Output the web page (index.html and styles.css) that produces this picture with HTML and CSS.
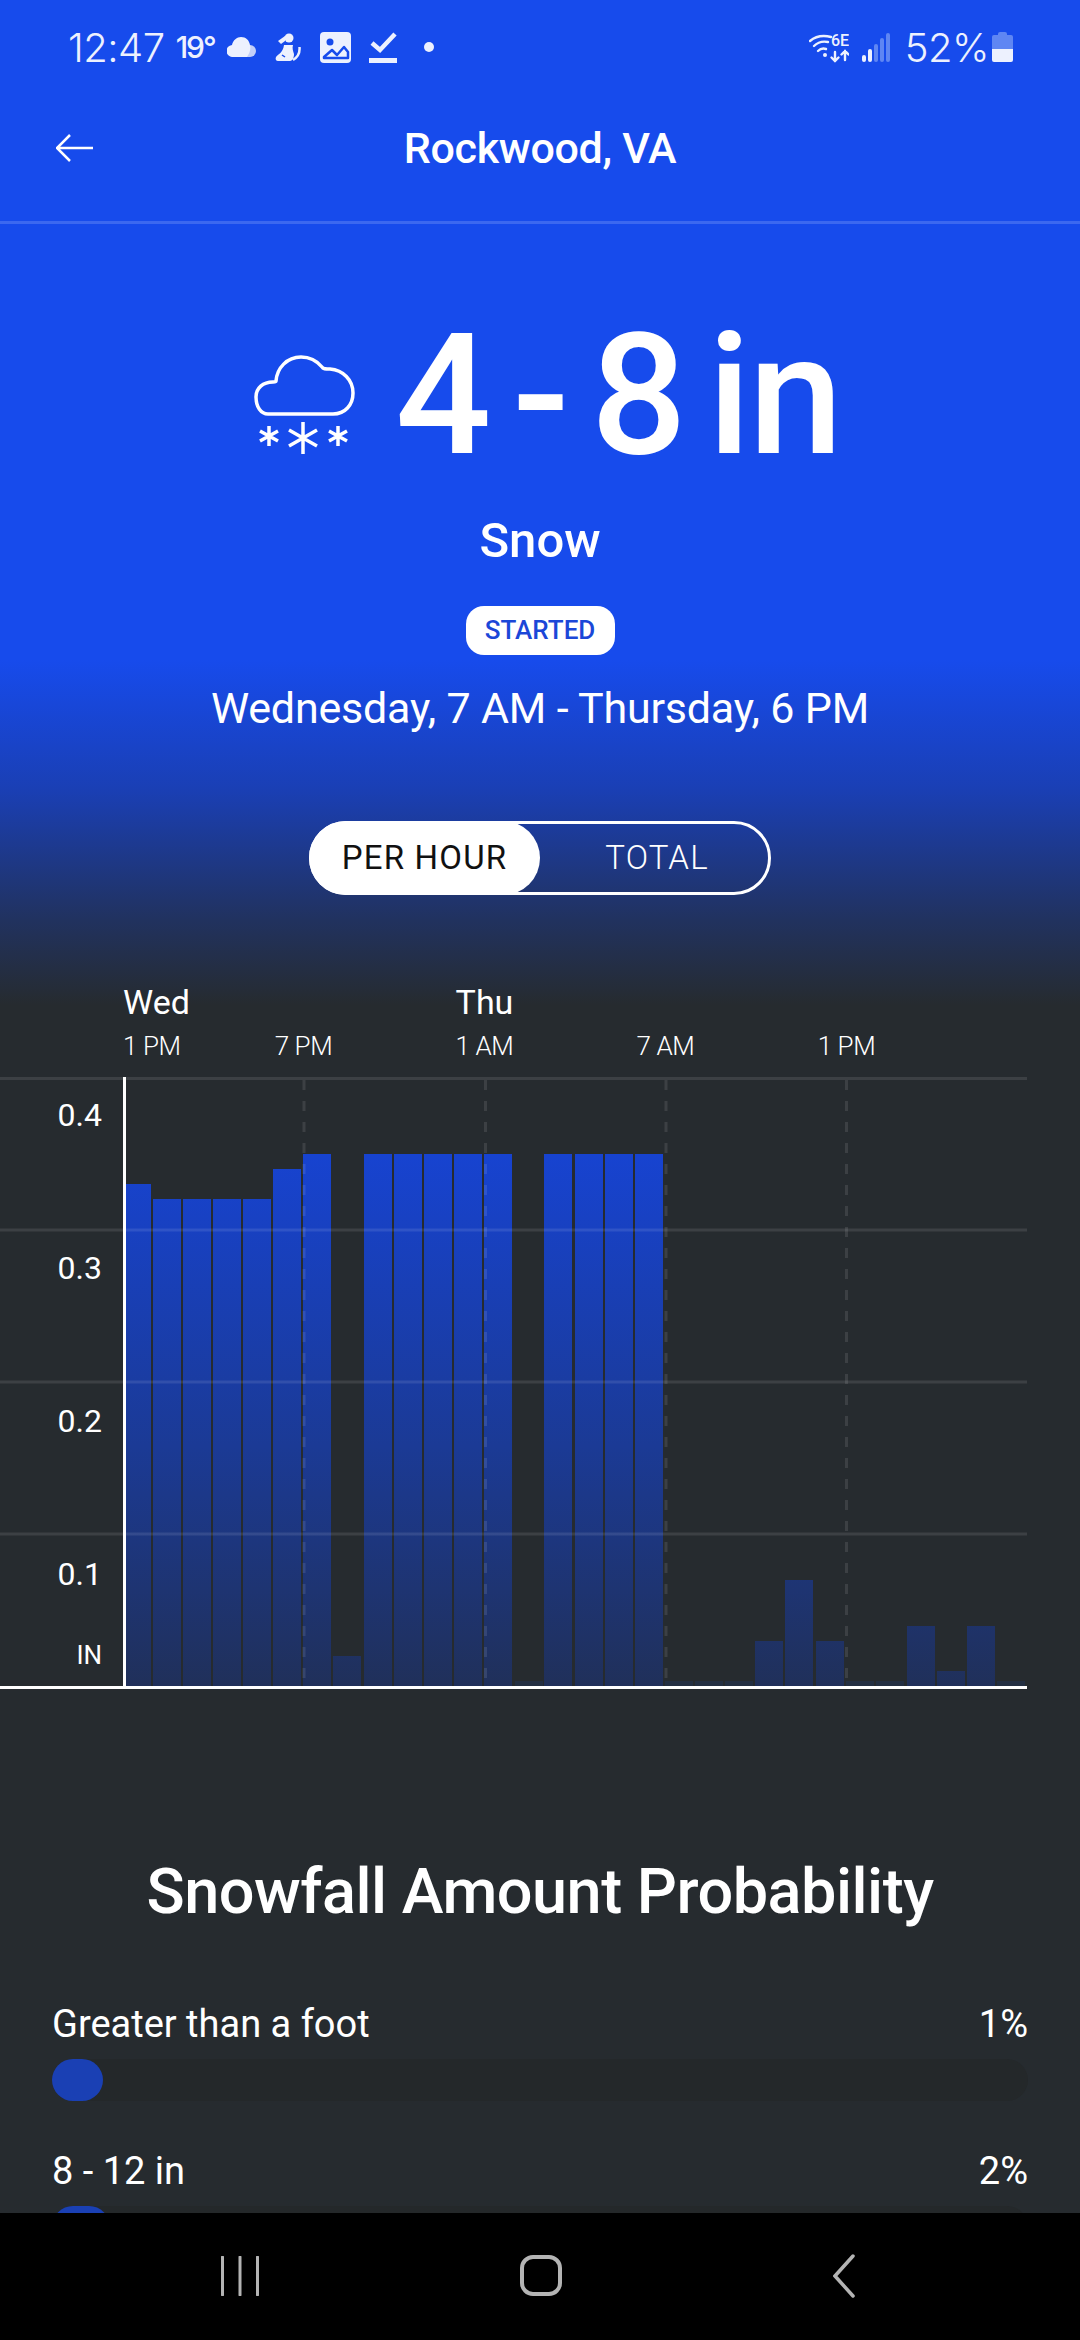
FILE: index.html
```html
<!DOCTYPE html>
<html lang="en">
<head>
    <meta charset="UTF-8">
    <meta name="viewport" content="width=device-width, initial-scale=1.0">
    <title>Rockwood, VA</title>
    <link rel="stylesheet" href="styles.css">
</head>
<body>
<div class="screen">
  <main class="content">
    <div class="status-bar">
      <div class="status-left">
        <span class="clock">12:47</span>
        <span class="temp">19°</span>
        <svg class="ic-cloud" width="29" height="20" viewBox="0 0 29 20">
          <path d="M8 20h15a6 6 0 0 0 0-12H8a6 6 0 0 0 0 12z" fill="#c3cff8"/>
          <path d="M6 20a6 6 0 0 1-1-12C6 3 10 0 14 0c5 0 8 3 9 8 1 3 0 8-3 12z" fill="#edf1fe"/>
        </svg>
        <svg class="ic-person" width="26" height="29" viewBox="0 0 26 29">
          <circle cx="14" cy="5" r="4.500" fill="#edf1fe"/>
          <path d="M3 8 10 3v5l-4 3z" fill="#edf1fe"/>
          <path d="M9 12H18C17 15 18 18 19 21C19 24 18 28 15 28H3C1 28 0 26 1 24C3 21 8 20 9 12Z" fill="#edf1fe"/>
          <path d="M24.500 14C25 19 23 24 18 27" fill="none" stroke="#edf1fe" stroke-width="2.500"/>
          <path d="M7 22l3 2" stroke="#174bec" stroke-width="1.500"/>
        </svg>
        <svg class="ic-image" width="31" height="31" viewBox="0 0 31 31">
          <rect width="31" height="31" rx="4" fill="#edf1fe"/>
          <circle cx="10" cy="10" r="3.500" fill="#174bec"/>
          <path d="M4 25 12 18l5 5 7-8 4 5v6H4z" fill="#edf1fe" stroke="#174bec" stroke-width="2.500" stroke-linejoin="round"/>
        </svg>
        <svg class="ic-check" width="28" height="31" viewBox="0 0 28 31">
          <path d="M3 11l8 7L26 2" fill="none" stroke="#edf1fe" stroke-width="4.500"/>
          <rect y="26" width="28" height="5" fill="#edf1fe"/>
        </svg>
        <span class="status-dot"></span>
      </div>
      <div class="status-right">
        <svg class="ic-wifi" width="40" height="31" viewBox="0 0 40 31">
          <g fill="none" stroke="#edf1fe" stroke-width="2.400" stroke-linecap="round">
            <path d="M1 9c6-5 13-6 21-4"/>
            <path d="M5 14c4-4 9-5 14-4"/>
            <path d="M9 19c2-2 5-3 8-2"/>
            <path d="M26 20v9m-3.500-3.500L26 29l3.500-3.500"/>
            <path d="M36 28v-9m-3.500 3.500L36 19l3.500 3.500"/>
          </g>
          <circle cx="16" cy="23" r="2" fill="#edf1fe"/>
          <text x="22" y="14" class="wifi-label">6E</text>
        </svg>
        <svg class="ic-signal" width="28" height="29" viewBox="0 0 28 29">
          <rect x="0" y="22" width="4" height="7" rx="2" fill="#edf1fe"/>
          <rect x="6" y="16" width="4" height="13" rx="2" fill="#edf1fe"/>
          <rect x="12" y="11" width="4" height="18" rx="2" fill="#5f86f3"/>
          <rect x="18" y="5" width="4" height="24" rx="2" fill="#5f86f3"/>
          <rect x="24" y="0" width="4" height="29" rx="2" fill="#5f86f3"/>
        </svg>
        <span class="battery-pct">52%</span>
        <div class="battery"><div class="battery-cap"></div><div class="battery-body"></div></div>
      </div>
    </div>

    <header class="top-bar">
      <svg class="back-arrow" width="37" height="28" viewBox="0 0 37 28">
        <path d="M14 1 1 14l13 13M1 14h36" fill="none" stroke="#fff" stroke-width="2.500"/>
      </svg>
      <h1>Rockwood, VA</h1>
    </header>

    <section class="hero">
      <div class="hero-main">
        <svg class="snow-icon" width="120" height="110" viewBox="0 0 120 110">
          <path d="M23 67H88C100 67 108 58 108 46C108 33 98 23 85 22C80 22 78 22 77 20C72 14 65 10 56 10C42 10 32 21 31 34C31 35 30 35 28 35C18 35 11 41 11 50C11 60 16 67 23 67Z" fill="none" stroke="#fff" stroke-width="3.500"/>
          <g fill="none" stroke="#fff" stroke-width="3.500">
            <path d="M24 79v20M15 84l18 10M33 84l-18 10"/>
            <path d="M58 75v32M44 83l28 16M72 83l-28 16"/>
            <path d="M93 79v20M84 84l18 10M102 84l-18 10"/>
          </g>
        </svg>
        <span class="amount">4 - 8 in</span>
      </div>
      <div class="hero-type">Snow</div>
      <div class="badge">STARTED</div>
      <div class="hero-dates">Wednesday, 7 AM - Thursday, 6 PM</div>
      <div class="toggle">
        <span class="toggle-on">PER HOUR</span>
        <span class="toggle-off">TOTAL</span>
      </div>
    </section>

    <section class="chart">
      <div class="chart-times">
        <span class="first day">Wed</span>
        <span></span>
        <span class="day">Thu</span>
        <span></span>
        <span></span>
        <span class="first">1 PM</span>
        <span>7 PM</span>
        <span>1 AM</span>
        <span>7 AM</span>
        <span>1 PM</span>
      </div>
      <div class="plot">
        <svg class="plot-svg" width="1027" height="612" viewBox="0 0 1027 612">
          <defs>
            <linearGradient id="barFill" gradientUnits="userSpaceOnUse" x1="0" y1="77" x2="0" y2="609">
              <stop offset="0" stop-color="#1743d0"/>
              <stop offset="0.55" stop-color="#1b3a95"/>
              <stop offset="1" stop-color="#20305a"/>
            </linearGradient>
          </defs>
          <g fill="url(#barFill)">
            <rect x="126" y="107" width="25" height="502"/>
            <rect x="153" y="122" width="28" height="487"/>
            <rect x="183" y="122" width="28" height="487"/>
            <rect x="213" y="122" width="28" height="487"/>
            <rect x="243" y="122" width="28" height="487"/>
            <rect x="273" y="92" width="28" height="517"/>
            <rect x="303" y="77" width="28" height="532"/>
            <rect x="333" y="579" width="28" height="30"/>
            <rect x="364" y="77" width="28" height="532"/>
            <rect x="394" y="77" width="28" height="532"/>
            <rect x="424" y="77" width="28" height="532"/>
            <rect x="454" y="77" width="28" height="532"/>
            <rect x="484" y="77" width="28" height="532"/>
            <rect x="544" y="77" width="28" height="532"/>
            <rect x="575" y="77" width="28" height="532"/>
            <rect x="605" y="77" width="28" height="532"/>
            <rect x="635" y="77" width="28" height="532"/>
            <rect x="755" y="564" width="28" height="45"/>
            <rect x="785" y="503" width="28" height="106"/>
            <rect x="816" y="564" width="28" height="45"/>
            <rect x="907" y="549" width="28" height="60"/>
            <rect x="937" y="594" width="28" height="15"/>
            <rect x="967" y="549" width="28" height="60"/>
          </g>
          <g fill="#232f42">
            <rect x="515" y="604" width="28" height="5"/>
            <rect x="665" y="604" width="28" height="5"/>
            <rect x="695" y="604" width="28" height="5"/>
            <rect x="725" y="604" width="28" height="5"/>
            <rect x="846" y="604" width="28" height="5"/>
            <rect x="876" y="604" width="28" height="5"/>
            <rect x="997" y="604" width="28" height="5"/>
          </g>
          <g stroke="#fff" stroke-opacity="0.1" stroke-width="3">
            <path d="M0 1.500H1027M0 153H1027M0 305H1027M0 457H1027"/>
          </g>
          <g stroke="#fff" stroke-opacity="0.1" stroke-width="3" stroke-dasharray="10 11">
            <path d="M304 3V609M485.500 3V609M666 3V609M846.500 3V609"/>
          </g>
          <path d="M124.500 0V609" stroke="#fff" stroke-width="3"/>
          <path d="M0 610.500H1027" stroke="#fff" stroke-width="3"/>
        </svg>
        <div class="plot-labels">
          <span>0.4</span>
          <span>0.3</span>
          <span>0.2</span>
          <span>0.1</span>
          <span class="unit">IN</span>
        </div>
      </div>
    </section>

    <section class="probability">
      <h2>Snowfall Amount Probability</h2>
      <div class="prob-row">
        <div class="prob-label"><span>Greater than a foot</span><span>1%</span></div>
        <div class="track"><div class="fill" style="width: 51px"></div></div>
      </div>
      <div class="prob-row">
        <div class="prob-label"><span>8 - 12 in</span><span>2%</span></div>
        <div class="track"><div class="fill" style="width: 58px"></div></div>
      </div>
    </section>
  </main>

  <nav class="nav-bar">
    <svg width="38" height="40" viewBox="0 0 38 40">
      <path d="M1.500 1V39M19 1V39M36.500 1V39" stroke="#b4b4b4" stroke-width="3" stroke-linecap="round"/>
    </svg>
    <div class="nav-home"></div>
    <svg width="22" height="44" viewBox="0 0 22 44">
      <path d="M20 2 2 22l18 20" fill="none" stroke="#b4b4b4" stroke-width="3.500" stroke-linecap="round"/>
    </svg>
  </nav>
</div>
</body>
</html>
```

FILE: styles.css
```css
* {
  box-sizing: border-box;
}

body {
  margin: 0;
  width: 1080px;
  height: 2340px;
  overflow: hidden;
  font-family: Roboto, "Liberation Sans", sans-serif;
  color: #fff;
  background: #000;
}

.screen {
  display: flex;
  flex-direction: column;
  height: 2340px;
}

.content {
  flex: 1;
  min-height: 0;
  overflow: hidden;
  background: linear-gradient(to bottom, #174bec 660px, #1a3fb4 790px, #21325f 920px, #262b2f 1005px);
}

/* status bar */
.status-bar {
  display: flex;
  justify-content: space-between;
  align-items: center;
  height: 94px;
  padding: 0 67px 0 68px;
}

.status-left,
.status-right {
  display: flex;
  align-items: center;
}

.clock,
.battery-pct {
  font-family: Inter, sans-serif;
  font-weight: 300;
  font-size: 40px;
  letter-spacing: -0.5px;
  color: #edf1fe;
}

.temp {
  margin-left: 11px;
  font-family: Inter, sans-serif;
  font-weight: 500;
  font-size: 30px;
  letter-spacing: -2px;
  color: #edf1fe;
}

.ic-cloud {
  margin-left: 12px;
}

.ic-person {
  margin-left: 19px;
}

.ic-image {
  margin-left: 19px;
}

.ic-check {
  margin-left: 18px;
}

.status-dot {
  width: 10px;
  height: 10px;
  margin-left: 27px;
  border-radius: 50%;
  background: #edf1fe;
}

.wifi-label {
  font-family: Roboto, sans-serif;
  font-weight: 500;
  font-size: 16px;
  fill: #edf1fe;
}

.ic-signal {
  margin-left: 13px;
}

.battery-pct {
  margin-left: 15px;
}

.battery {
  display: flex;
  flex-direction: column;
  align-items: center;
  width: 21px;
  height: 30px;
  margin-left: 3px;
}

.battery-cap {
  width: 9px;
  height: 3px;
  border-radius: 2px 2px 0 0;
  background: #5f86f3;
}

.battery-body {
  flex: 1;
  width: 100%;
  border-radius: 2px;
  background: linear-gradient(to bottom, #5f86f3 50%, #edf1fe 50%);
}

/* header */
.top-bar {
  display: grid;
  grid-template-columns: 1fr auto 1fr;
  align-items: center;
  height: 130px;
  padding: 0 56px 20px;
  border-bottom: 3px solid #3c68f0;
}

.top-bar h1 {
  margin: 0;
  font-size: 43px;
  font-weight: 500;
  letter-spacing: -0.3px;
}

/* hero */
.hero {
  display: flex;
  flex-direction: column;
  align-items: center;
}

.hero-main {
  display: flex;
  align-items: center;
  justify-content: center;
  height: 180px;
  margin-top: 81px;
  padding-left: 6px;
}

.snow-icon {
  margin-top: 14px;
}

.amount {
  margin-left: 30px;
  font-size: 169px;
  font-weight: 500;
  line-height: 180px;
  word-spacing: -17px;
  letter-spacing: -2px;
}

.hero-type {
  margin-top: 28px;
  font-size: 49px;
  font-weight: 500;
  line-height: 56px;
}

.badge {
  width: 149px;
  height: 49px;
  margin-top: 37px;
  border-radius: 18px;
  background: #fff;
  color: #1b47d8;
  font-size: 26px;
  font-weight: 500;
  line-height: 49px;
  text-align: center;
}

.hero-dates {
  margin-top: 28px;
  font-size: 43px;
  line-height: 50px;
  letter-spacing: -0.2px;
}

.toggle {
  display: flex;
  width: 462px;
  height: 74px;
  margin-top: 88px;
  border: 3px solid #fff;
  border-radius: 37px;
}

.toggle span {
  font-size: 33px;
  font-weight: 300;
  line-height: 68px;
  text-align: center;
  letter-spacing: 1.2px;
}

.toggle .toggle-on {
  width: 231px;
  margin: -3px 0 -3px -3px;
  border-radius: 37px;
  background: #fff;
  color: #111;
  font-weight: 400;
  line-height: 74px;
}

.toggle-off {
  flex: 1;
  padding-left: 6px;
}

/* chart */
.chart {
  margin-top: 87px;
}

.chart-times {
  display: grid;
  grid-template-columns: 90px repeat(4, 181px);
  row-gap: 8px;
  padding-left: 123px;
  margin-bottom: 15px;
}

.chart-times span {
  text-align: center;
  white-space: nowrap;
  font-size: 26px;
  font-weight: 300;
  line-height: 32px;
  letter-spacing: -0.4px;
}

.chart-times .first {
  text-align: left;
}

.chart-times .day {
  font-size: 34px;
  font-weight: 400;
  line-height: 40px;
  letter-spacing: 0;
}

.plot {
  display: grid;
  width: 1027px;
}

.plot-svg,
.plot-labels {
  display: block;
  grid-area: 1 / 1;
}

.plot-labels {
  display: flex;
  flex-direction: column;
  align-items: flex-end;
  width: 102px;
  padding-top: 19px;
}

.plot-labels span {
  height: 153px;
  font-size: 32px;
  line-height: 38px;
}

.plot-labels .unit {
  height: auto;
  margin-top: -72px;
  font-size: 26px;
}

/* probability */
.probability {
  padding: 0 52px;
  margin-top: 168px;
}

.probability h2 {
  margin: 0 0 75px;
  font-size: 63px;
  font-weight: 500;
  line-height: 70px;
  text-align: center;
  letter-spacing: -0.5px;
}

.prob-row {
  margin-bottom: 48px;
}

.prob-label {
  display: flex;
  justify-content: space-between;
  font-size: 38px;
  line-height: 44px;
}

.track {
  height: 42px;
  margin-top: 13px;
  border-radius: 21px;
  background: #24282a;
}

.fill {
  height: 100%;
  border-radius: 21px;
  background: #1a40b4;
}

/* bottom nav */
.nav-bar {
  display: flex;
  align-items: center;
  height: 127px;
  padding: 0 0 2px 221px;
  background: #000;
}

.nav-home {
  width: 42px;
  height: 41px;
  margin: 0 271px 0 261px;
  border: 4px solid #b4b4b4;
  border-radius: 13px;
}
```
